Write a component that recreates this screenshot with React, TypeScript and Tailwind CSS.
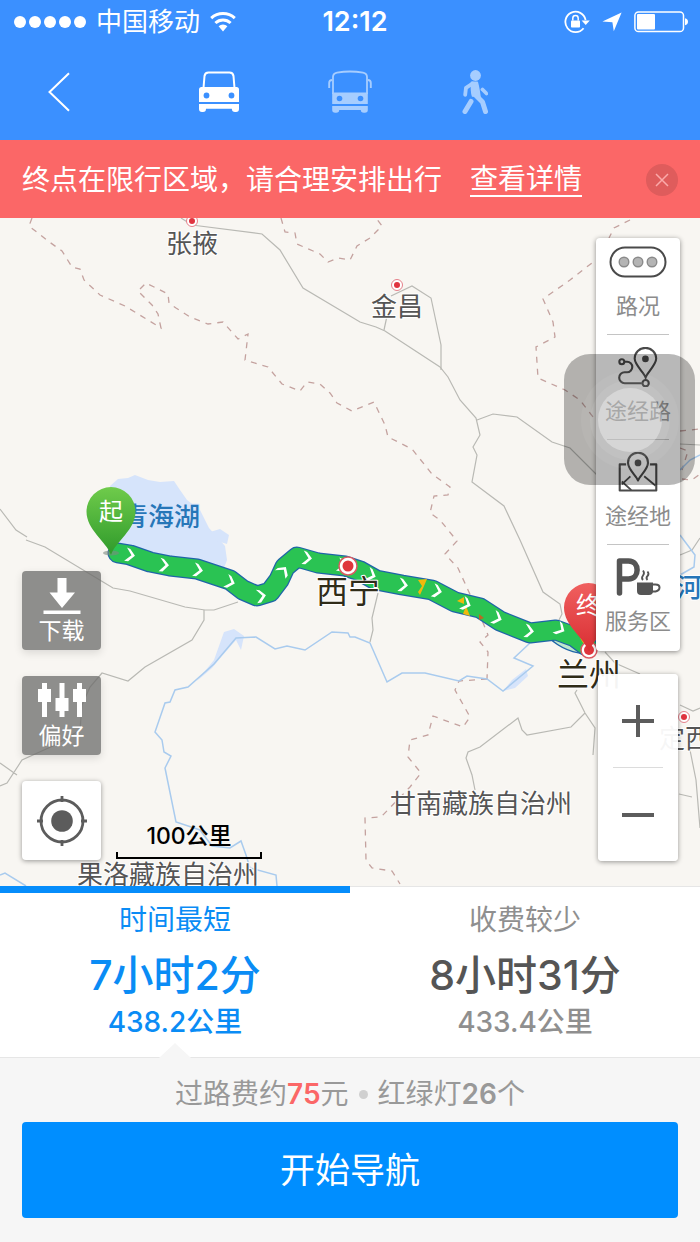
import { useState } from "react";
import type { ReactNode } from "react";

function StatusBar() {
  return (
    <div className="grid h-11 grid-cols-[1fr_auto_1fr] items-center pr-1 pl-[14px]">
      <div className="flex items-center gap-[10px]">
        <div className="flex gap-[3px]">
          {[0, 1, 2, 3, 4].map((i) => (
            <span key={i} className="size-3 rounded-full bg-white" />
          ))}
        </div>
        <span className="text-[26px] leading-8">中国移动</span>
        <svg viewBox="0 0 26 20" className="h-5 w-[26px]" fill="none" stroke="currentColor">
          <path d="M1.2 6.2a17.5 17.5 0 0 1 23.6 0" strokeWidth="3" />
          <path d="M5.4 11a11.2 11.2 0 0 1 15.2 0" strokeWidth="3" />
          <path d="M8.6 14.2a6.4 6.4 0 0 1 8.800 0L13 19.4z" fill="currentColor" stroke="none" />
        </svg>
      </div>
      <span className="text-[27px] leading-8 font-semibold">12:12</span>
      <div className="mr-2 flex items-center justify-end gap-3">
        <svg viewBox="0 0 26 24" className="h-6 w-[26px]">
          <path d="M19.6 18.2A10.2 10.2 0 1 1 21.6 10" fill="none" stroke="currentColor" strokeWidth="1.8" />
          <path d="M17.6 10.5h8.2l-4.1 4.6z" fill="currentColor" />
          <rect x="7" y="10.4" width="9" height="7.2" rx="0.8" fill="currentColor" />
          <path d="M8.8 10.4V8.3a2.7 2.7 0 0 1 5.4 0v2.1" fill="none" stroke="currentColor" strokeWidth="1.5" />
        </svg>
        <svg viewBox="0 0 20 20" className="size-5" fill="currentColor">
          <path d="M19.6.4 11.8 19.2 10.4 10.2.4 9.6z" />
        </svg>
        <svg viewBox="0 0 54 22" className="h-[22px] w-[54px]">
          <rect x="0.9" y="0.9" width="48.6" height="19.6" rx="3.6" fill="none" stroke="currentColor" strokeWidth="1.5" />
          <rect x="3" y="3" width="18" height="15.4" rx="1" fill="currentColor" />
          <path d="M51 7.2c2 .4 3 1.700 3 3.500s-1 3.100-3 3.500z" fill="currentColor" />
        </svg>
      </div>
    </div>
  );
}

function NavBar() {
  const [mode, setMode] = useState("car");
  const tone = (m: string) => (mode === m ? "opacity-100" : "opacity-55");
  return (
    <nav className="flex h-24 items-center pl-12">
      <button type="button" aria-label="返回" className="mr-32 flex w-[22px] justify-center">
        <svg viewBox="0 0 22 40" className="h-10 w-[22px]" fill="none" stroke="currentColor" strokeWidth="2">
          <path d="M21 1.200 1.500 20 21 38.800" />
        </svg>
      </button>
      <div className="flex items-center gap-[88px]">
        <button type="button" aria-label="驾车" onClick={() => setMode("car")} className={tone("car")}>
          <svg viewBox="0 0 42 42" className="size-[42px]">
            <path d="M5.500 17 6.500 5q.5-3.400 4-3.400h21q3.500 0 4 3.400l1 12" fill="none" stroke="currentColor" strokeWidth="2" />
            <path d="M1 18.500q0-2.500 2.500-2.500h35q2.500 0 2.500 2.500V31H1z" fill="currentColor" />
            <path d="M1 33h40v5q0 3-3 3h-1q-3 0-3.200-3.300H8Q8 41 5 41H4q-3 0-3-3z" fill="currentColor" />
            <circle cx="8.500" cy="24.500" r="2.900" className="fill-[#3b90ff]" />
            <circle cx="33.500" cy="24.500" r="2.900" className="fill-[#3b90ff]" />
          </svg>
        </button>
        <button type="button" aria-label="公交" onClick={() => setMode("bus")} className={tone("bus")}>
          <svg viewBox="0 0 44 44" className="size-11">
            <path d="M5 24V7q0-3.500 4-4.300Q22 .3 35 2.700q4 .8 4 4.300v17" fill="none" stroke="currentColor" strokeWidth="1.800" />
            <path d="M4.200 10Q1.200 10 1.200 13v5M39.800 10q3 0 3 3v5" fill="none" stroke="currentColor" strokeWidth="1.900" />
            <path d="M4.200 22.500h35.600V34H4.200zM4.200 36h35.600v4q0 2.800-3 2.800h-1q-3 0-3-2.800H11.200q0 2.800-3 2.800h-1q-3 0-3-2.800z" fill="currentColor" />
            <circle cx="11.500" cy="28.500" r="2.800" className="fill-[#3b90ff]" />
            <circle cx="32.500" cy="28.500" r="2.800" className="fill-[#3b90ff]" />
          </svg>
        </button>
        <button type="button" aria-label="步行" onClick={() => setMode("walk")} className={tone("walk")}>
          <svg viewBox="0 0 28 46" className="h-[46px] w-7" fill="none" stroke="currentColor" strokeLinecap="round" strokeLinejoin="round">
            <circle cx="15.500" cy="6.500" r="5.400" fill="currentColor" stroke="none" />
            <path d="M11.500 13.200h5.800q1.400 4.800 2.700 14.300l-7.500-.5q-1.500-5-1-13.800z" fill="currentColor" strokeWidth="1.500" />
            <path d="M12.500 14.500 6 18.800l-.8 7" strokeWidth="3.800" />
            <path d="m22.500 20.500 4 4" strokeWidth="3.800" />
            <path d="M16 26.500 22.500 33l3 9.500" strokeWidth="5" />
            <path d="m11 32.500-6 10" strokeWidth="5" />
          </svg>
        </button>
      </div>
    </nav>
  );
}

function City({ x, y }: { x: number; y: number }) {
  return (
    <g>
      <circle cx={x} cy={y} r="5.500" fill="#fff" stroke="#e5808a" strokeWidth="1" />
      <circle cx={x} cy={y} r="3" fill="#e0333f" />
    </g>
  );
}

const ROUTE =
  "M118 553 L130 555 L150 562 L170 566 L197 569 L230 580 L243 590 L257 596 L270 592 L279 580 L285 567 L297 557 L318 563 L345 566 L360 571 L376 580 L402 585 L432 590 L455 602 L480 608 L500 621 L530 633 L556 630 L575 637 L587 646";

const ARROWS: [number, number, number][] = [
  [130, 555, 8], [164, 565, 4], [198, 570, 8], [230, 582, 18], [261, 596, -10], [283, 571, -55],
  [307, 558, 6], [342, 565, 10], [371, 575, 20], [403, 585, 6], [437, 591, 12], [466, 604, 20],
  [497, 618, 20], [529, 631, 6], [560, 629, 28],
];

function MapCanvas() {
  return (
    <svg
      viewBox="0 218 700 668"
      preserveAspectRatio="xMidYMid slice"
      className="absolute inset-0 size-full bg-[#f8f6f2]"
      role="img"
      aria-label="路线地图"
    >
      <defs>
        <linearGradient id="startPin" x1="0" y1="0" x2="0" y2="1">
          <stop offset="0" stopColor="#6fcb4b" />
          <stop offset="1" stopColor="#2f9a2b" />
        </linearGradient>
        <linearGradient id="endPin" x1="0" y1="0" x2="0" y2="1">
          <stop offset="0" stopColor="#f0605f" />
          <stop offset="1" stopColor="#d92e33" />
        </linearGradient>
      </defs>

      <g fill="#d6e4fb">
        <path d="M110 486 L118 479 L128 478 L135 475 L148 480 L160 482 L174 481 L180 490 L187 500 L200 510 L209 528 L218 538 L225 546 L227 560 L224 568 L190 562 L150 556 L115 548Z" />
        <path d="M210 532 L220 529 L229 535 L227 544 L217 541Z" />
        <path d="M224 632 L234 629 L244 636 L241 650 L236 640 L222 656 L212 668 L197 681 L214 660Z" />
        <path d="M503 691 L512 680 L526 669 L528 676 L515 688Z" />
      </g>

      <g fill="none" stroke="#c4a29f" strokeWidth="1.300" strokeDasharray="6 6">
        <path d="M32 218 L29 226 L48 241 L62 251 L72 267 L80 269 L84 280 L100 295 L125 306 L161 328 L158 314 L152 305 L138 291 L146 283 L168 294 L169 303 L176 308 L190 317 L208 324 L223 322 L238 339 L248 334 L245 360 L268 367 L282 384 L300 391 L307 382 L320 384 L330 393 L337 403 L352 411 L374 402 L385 425 L388 437 L412 449 L432 474 L450 487 L448 495 L434 496 L430 513 L440 520 L457 541 L445 554 L458 568 L468 590 L481 618 L488 635 L480 642 L488 652 L487 679" />
        <path d="M487 679 L459 681 L455 690 L470 717 L463 727 L433 716 L428 735 L410 740 L408 757 L421 773 L410 787 L381 817 L365 818 L366 860 L372 868 L392 871 L400 884" />
        <path d="M281 218 L285 232 L295 233 L297 244 L320 254 L328 262 L338 258 L350 260 L357 246 L370 238 L382 226 L376 218" />
        <path d="M630 220 L614 228 L609 238 L597 259 L570 280 L543 299 L553 322 L555 337 L536 347 L538 378 L565 390 L580 400 L597 422" />
        <path d="M680 431 L700 429 M680 448 L688 451 L682 470 M682 479 L692 480 L700 474" />
      </g>

      <g fill="none" stroke="#b9b9b4" strokeWidth="1.200">
        <path d="M181 218 L192 225 L262 234 L280 250 L303 288 L350 316 L360 322 L376 327 L385 331 L440 367 L448 377 L460 400 L476 418 L480 435 L473 447 L477 455 L472 482 L504 506 L520 540 L543 592 L560 604 L562 614 L558 622" />
        <path d="M391 296 L412 286 L431 298 L441 345 L441 370 M387 316 L384 330" />
        <path d="M477 420 L493 414 L517 417 L552 442 L570 448 L597 475" />
        <path d="M0 509 L16 530 L27 537 M26 540 L45 547 L113 588 L130 591 L185 607 L205 610 L214 610 L238 602" />
        <path d="M204 610 L204 620 L192 640 L145 667 L128 681 L102 673 L90 687 L82 705 L80 730 L55 745 L22 760 L7 783 L0 786 M0 763 L17 775" />
        <path d="M378 593 L372 618 L373 630 L370 642" />
        <path d="M577 690 L575 693 L585 713 L595 728 L593 755 M585 713 L571 727 L527 735 L522 730 L518 718 L480 747 L468 752 L466 758 L472 775 L475 790" />
        <path d="M605 652 L615 663 L640 674 M680 705 L693 711 L700 708 M690 750 L696 780 L700 828 M679 794 L692 797 M680 444 L700 445 M680 555 L692 550 L700 538" />
      </g>

      <g fill="none" stroke="#a9cbee" strokeWidth="1.500">
        <path d="M530 643 L514 658 L533 666 L503 691 L487 679 L467 676 L459 681 L425 673 L402 673 L387 682 L370 643 L355 637 L350 637 L348 633 L332 632 L305 650 L287 646 L275 649 L256 637 L236 638 L214 664 L188 687 L175 690 L170 702 L165 703 L155 732 L162 740 L164 752 L171 756 L165 768 L176 822 L200 830 L212 846 L230 848 L241 841 L246 855 L250 868 L276 875 L277 886" />
        <path d="M0 875 L5 873 L26 886 M680 470 L690 460 L700 455 M680 535 L695 555 L694 567 L680 575" />
      </g>

      <g fontSize="26" fill="#555" stroke="#fff" strokeWidth="2" strokeLinejoin="round" className="[paint-order:stroke]">
        <text x="166" y="253">张掖</text>
        <text x="371" y="316">金昌</text>
        <text x="390" y="813">甘南藏族自治州</text>
        <text x="77" y="884">果洛藏族自治州</text>
        <text x="659" y="748">定西</text>
        <g fill="#2676b8" fontWeight="500">
          <text x="122" y="526" stroke="#d6e4fb">青海湖</text>
          <text x="676" y="597">河</text>
        </g>
      </g>
      <City x={192} y={221} />
      <City x={397} y={285} />
      <City x={684} y={717} />

      <path d="M548 637 Q570 638 590 654 Q566 654 548 637Z" fill="#bfe8cc" stroke="#1f64a8" strokeWidth="1.200" />
      <g fill="none" strokeLinejoin="round" strokeLinecap="round">
        <path d={ROUTE} stroke="#1f64a8" strokeWidth="21" />
        <path d={ROUTE} stroke="#2ac353" strokeWidth="18.500" />
      </g>
      <path d="M418 580 L427 579 L424 586 L420 595 L418 592 L422 586Z M457 601 L464 597 L464 604Z M463 614 L466 606 L470 616Z M580 638 L588 642 L585 646Z" fill="#f0b90c" />
      <path d="M479 614 L484 618 L479 620Z" fill="#b96a22" />
      {ARROWS.map(([x, y, r]) => (
        <path
          key={x}
          d="M-4 -7 L-0.500 -6 L5 0 L-1 6.500 L-5 6.500 L1.500 0Z"
          transform={`translate(${x} ${y}) rotate(${r})`}
          fill="#fff"
        />
      ))}

      <g fill="#fff" stroke="#dc5961" strokeWidth="1.500">
        <circle cx="348" cy="566" r="9" />
        <circle cx="589" cy="650" r="8" />
      </g>
      <circle cx="348" cy="566" r="5.500" fill="#df353c" />
      <circle cx="589" cy="650" r="5" fill="#df353c" />
      <g fontSize="32" fill="#302c18" stroke="#fff" strokeWidth="2" strokeLinejoin="round" className="[paint-order:stroke]">
        <text x="316" y="603">西宁</text>
        <text x="557" y="686">兰州</text>
      </g>

      <ellipse cx="111" cy="553" rx="8" ry="2.500" fill="#7d8a80" opacity="0.600" />
      <path d="M111 555 C106 541 86.500 530 86.500 511.500 A24.500 24.500 0 0 1 135.500 511.500 C135.500 530 116 541 111 555Z" fill="url(#startPin)" />
      <path d="M589 652 C584 637 564 626 564 607.500 A24.500 24.500 0 0 1 613 607.500 C613 626 594 637 589 652Z" fill="url(#endPin)" />
      <g fontSize="24" fill="#fff" textAnchor="middle">
        <text x="111" y="520">起</text>
        <text x="588" y="614">终</text>
      </g>
    </svg>
  );
}

function TrafficIcon() {
  return (
    <svg viewBox="0 0 58 40" className="h-10 w-[58px]" fill="none" stroke="#4a4a4a">
      <rect x="1.500" y="5.500" width="55" height="29" rx="14.500" strokeWidth="2" />
      {[15, 29, 43].map((cx) => (
        <circle key={cx} cx={cx} cy="20" r="4.800" fill="#b4b4b4" stroke="#8a8a8a" strokeWidth="1.400" />
      ))}
    </svg>
  );
}

function RoadIcon() {
  return (
    <svg viewBox="0 0 42 42" className="h-10 w-[42px]" fill="none" stroke="#4a4a4a" strokeWidth="2.200">
      <path d="M29 32C27.500 27 17.500 19 17.500 12.200a11.300 11.300 0 0 1 22.600 0C40.100 19 30.500 27 29 32z" />
      <circle cx="28.800" cy="12.500" r="3.500" fill="#4a4a4a" stroke="none" />
      <circle cx="4" cy="15.500" r="2.600" />
      <path d="M7 15.500h2.500a5 5 0 0 1 0 11H7a5.500 5.500 0 0 0 0 11.500h18" />
      <circle cx="29" cy="38" r="3.300" />
    </svg>
  );
}

function PlaceIcon() {
  return (
    <svg viewBox="0 0 42 42" className="h-10 w-[42px]" fill="none" stroke="#4a4a4a" strokeWidth="2.200" strokeLinejoin="round">
      <path d="M8.500 13H1.800v27.500h38.400V13h-6.700" />
      <path d="M21 30C19.500 25 10.500 18.500 10.500 11.200a10.500 10.500 0 0 1 21 0C31.500 18.500 22.500 25 21 30z" />
      <circle cx="21" cy="11.500" r="3.500" fill="#4a4a4a" stroke="none" />
      <path d="m4 34 9-8.500M4 31l10 9M27.500 25.500 39.500 35.500" strokeWidth="1.900" />
    </svg>
  );
}

function ServiceIcon() {
  return (
    <svg viewBox="0 0 46 40" className="h-10 w-[46px]" fill="none" stroke="#555">
      <path d="M4.500 36V4h9c11.500 0 11.500 18 0 18h-9" strokeWidth="5.500" strokeLinejoin="round" strokeLinecap="round" />
      <path d="M22 25.500h16V34q0 4-4 4h-8q-4 0-4-4z" fill="#555" stroke="none" />
      <path d="M38 27.500h2.500q4 0 4 3t-4 4H37" strokeWidth="2" />
      <path d="M28 23q-2-2 0-4.500t0-5M32.500 23q-2-2 0-4t0-4.500" strokeWidth="1.800" />
    </svg>
  );
}

const LAYERS: { label: string; icon: ReactNode; box: string; rule: boolean }[] = [
  { label: "路况", icon: <TrafficIcon />, box: "pt-1 pb-[14px]", rule: true },
  { label: "途经路", icon: <RoadIcon />, box: "pt-3 pb-[14px]", rule: true },
  { label: "途经地", icon: <PlaceIcon />, box: "pt-3 pb-[14px]", rule: true },
  { label: "服务区", icon: <ServiceIcon />, box: "pt-3 pb-4", rule: false },
];

function MapControls() {
  return (
    <>
      <div className="absolute bottom-[26px] left-[22px] flex flex-col gap-[26px]">
        <button type="button" className="flex size-[79px] flex-col items-center rounded bg-[#6b6b69]/75 pt-[6px] text-[23px] leading-8 text-white shadow-[0_3px_8px_rgba(0,0,0,0.12)]">
          <svg viewBox="0 0 38 38" className="size-[38px]" fill="currentColor">
            <path d="M14.500 1h9v14.500H32L19 31 6.500 15.500h8zM.5 33.500h37V37H.5z" />
          </svg>
          <span>下载</span>
        </button>
        <button type="button" className="flex size-[79px] flex-col items-center rounded bg-[#6b6b69]/75 pt-[6px] text-[23px] leading-8 text-white shadow-[0_3px_8px_rgba(0,0,0,0.12)]">
          <svg viewBox="0 0 50 38" className="h-[38px] w-[50px]" fill="currentColor">
            <path d="M5 1h5v6h4v13h-4v15H5V20H1V7h4zM22.500 1h5v15h4v13h-4v6h-5v-6h-4V16h4zM40 1h5v6h4v13h-4v15h-5V20h-4V7h4z" />
          </svg>
          <span>偏好</span>
        </button>
        <button type="button" aria-label="定位" className="flex size-[79px] items-center justify-center rounded bg-white shadow-[0_1px_5px_rgba(0,0,0,0.4)]">
          <svg viewBox="0 0 50 50" className="size-[50px]" fill="none" stroke="#5c5c5c">
            <circle cx="25" cy="25" r="21" strokeWidth="2.800" />
            <circle cx="25" cy="25" r="10.800" fill="#5c5c5c" stroke="none" />
            <path d="M25 0v6M25 44v6M0 25h6M44 25h6" strokeWidth="2.800" />
          </svg>
        </button>
      </div>

      <div className="absolute bottom-[27px] left-[116px] w-[146px] text-center text-[23px] leading-6 font-medium text-black">
        100公里
        <div className="mt-1 h-[7px] border-x-2 border-b-2 border-black" />
      </div>

      <div className="absolute top-5 right-5 flex flex-col items-center gap-[23px]">
        <div className="flex w-[84px] flex-col rounded bg-white shadow-[0_1px_5px_rgba(0,0,0,0.45)]">
          {LAYERS.map(({ label, icon, box, rule }) => (
            <div key={label}>
              <button type="button" className={`flex w-full flex-col items-center gap-[10px] text-[22px] leading-7 text-[#8c8c8c] ${box}`}>
                {icon}
                <span>{label}</span>
              </button>
              {rule && <div className="mx-[11px] h-px bg-[#c4c4c4]" />}
            </div>
          ))}
        </div>
        <div className="flex w-20 flex-col rounded bg-white/95 shadow-[0_1px_5px_rgba(0,0,0,0.4)]">
          <button type="button" aria-label="放大" className="flex h-[93px] items-center justify-center">
            <svg viewBox="0 0 34 34" className="size-[34px]" stroke="#5c5c5c" strokeWidth="4">
              <path d="M17 1v32M1 17h32" />
            </svg>
          </button>
          <div className="mx-[15px] h-px bg-[#dcdcdc]" />
          <button type="button" aria-label="缩小" className="flex h-[93px] items-center justify-center">
            <svg viewBox="0 0 34 34" className="size-[34px]" stroke="#5c5c5c" strokeWidth="4">
              <path d="M1 17h32" />
            </svg>
          </button>
        </div>
      </div>

      <button type="button" aria-label="辅助触控" className="absolute top-[136px] right-[5px] flex size-[131px] items-center justify-center rounded-[26px] bg-black/28">
        <span className="flex size-[98px] items-center justify-center rounded-full bg-white/5">
          <span className="flex size-20 items-center justify-center rounded-full bg-white/8">
            <span className="size-16 rounded-full bg-white/35" />
          </span>
        </span>
      </button>
    </>
  );
}

const PLANS = [
  { name: "时间最短", time: "7小时2分", distance: "438.2公里" },
  { name: "收费较少", time: "8小时31分", distance: "433.4公里" },
];

function Plans() {
  const [active, setActive] = useState(0);
  return (
    <div role="tablist" className="grid grid-cols-2 bg-white">
      {PLANS.map((plan, i) => {
        const on = i === active;
        return (
          <button
            key={plan.name}
            type="button"
            role="tab"
            aria-selected={on}
            onClick={() => setActive(i)}
            className={`relative flex flex-col items-center border-t border-[#e6e6e6] pt-[13px] pb-[23px] ${on ? "text-[#0a8cf5]" : "text-[#8f8f8f]"}`}
          >
            {on && <span className="absolute inset-x-0 -top-px h-[7px] bg-[#068dfb]" />}
            <span className="text-[28px] leading-10">{plan.name}</span>
            <span className={`text-[41px] leading-[70px] font-medium ${on ? "" : "text-[#555]"}`}>{plan.time}</span>
            <span className="text-[28px] leading-6 font-medium">{plan.distance}</span>
            {on && (
              <svg viewBox="0 0 32 15" className="absolute -bottom-px h-[15px] w-8">
                <path d="M0 15 16 0l16 15z" fill="#f6f6f6" />
              </svg>
            )}
          </button>
        );
      })}
    </div>
  );
}

export default function App() {
  return (
    <div lang="zh-CN" className="flex min-h-screen flex-col bg-[#f6f6f6] font-['Inter','Noto_Sans_CJK_SC',sans-serif]">
      <header className="bg-[#3b90ff] text-white">
        <StatusBar />
        <NavBar />
      </header>

      <div className="flex h-[78px] items-center bg-[#fb6767] px-[22px] pt-[2px] text-[28px] leading-10 text-white">
        <p>终点在限行区域，请合理安排出行</p>
        <a href="#details" className="ml-7 border-b-2 border-white leading-8">查看详情</a>
        <button type="button" aria-label="关闭" className="ml-auto flex size-8 items-center justify-center rounded-full bg-[#df5c5c]">
          <svg viewBox="0 0 14 14" className="size-[14px]" stroke="#fbaaaa" strokeWidth="1.500">
            <path d="m1 1 12 12M13 1 1 13" />
          </svg>
        </button>
      </div>

      <main className="relative min-h-[660px] flex-1 overflow-hidden">
        <MapCanvas />
        <MapControls />
      </main>

      <Plans />

      <footer className="border-t border-[#e6e6e6] px-[22px] pt-4 pb-6">
        <p className="flex items-center justify-center gap-[10px] text-[28px] leading-10 text-[#999]">
          <span>
            过路费约<b className="font-semibold text-[#fb6767]">75</b>元
          </span>
          <span className="size-[9px] rounded-full bg-[#d0d0d0]" />
          <span>
            红绿灯<b className="font-semibold">26</b>个
          </span>
        </p>
        <button type="button" className="mt-2 h-24 w-full rounded bg-[#008eff] text-[35px] text-white">
          开始导航
        </button>
      </footer>
    </div>
  );
}
